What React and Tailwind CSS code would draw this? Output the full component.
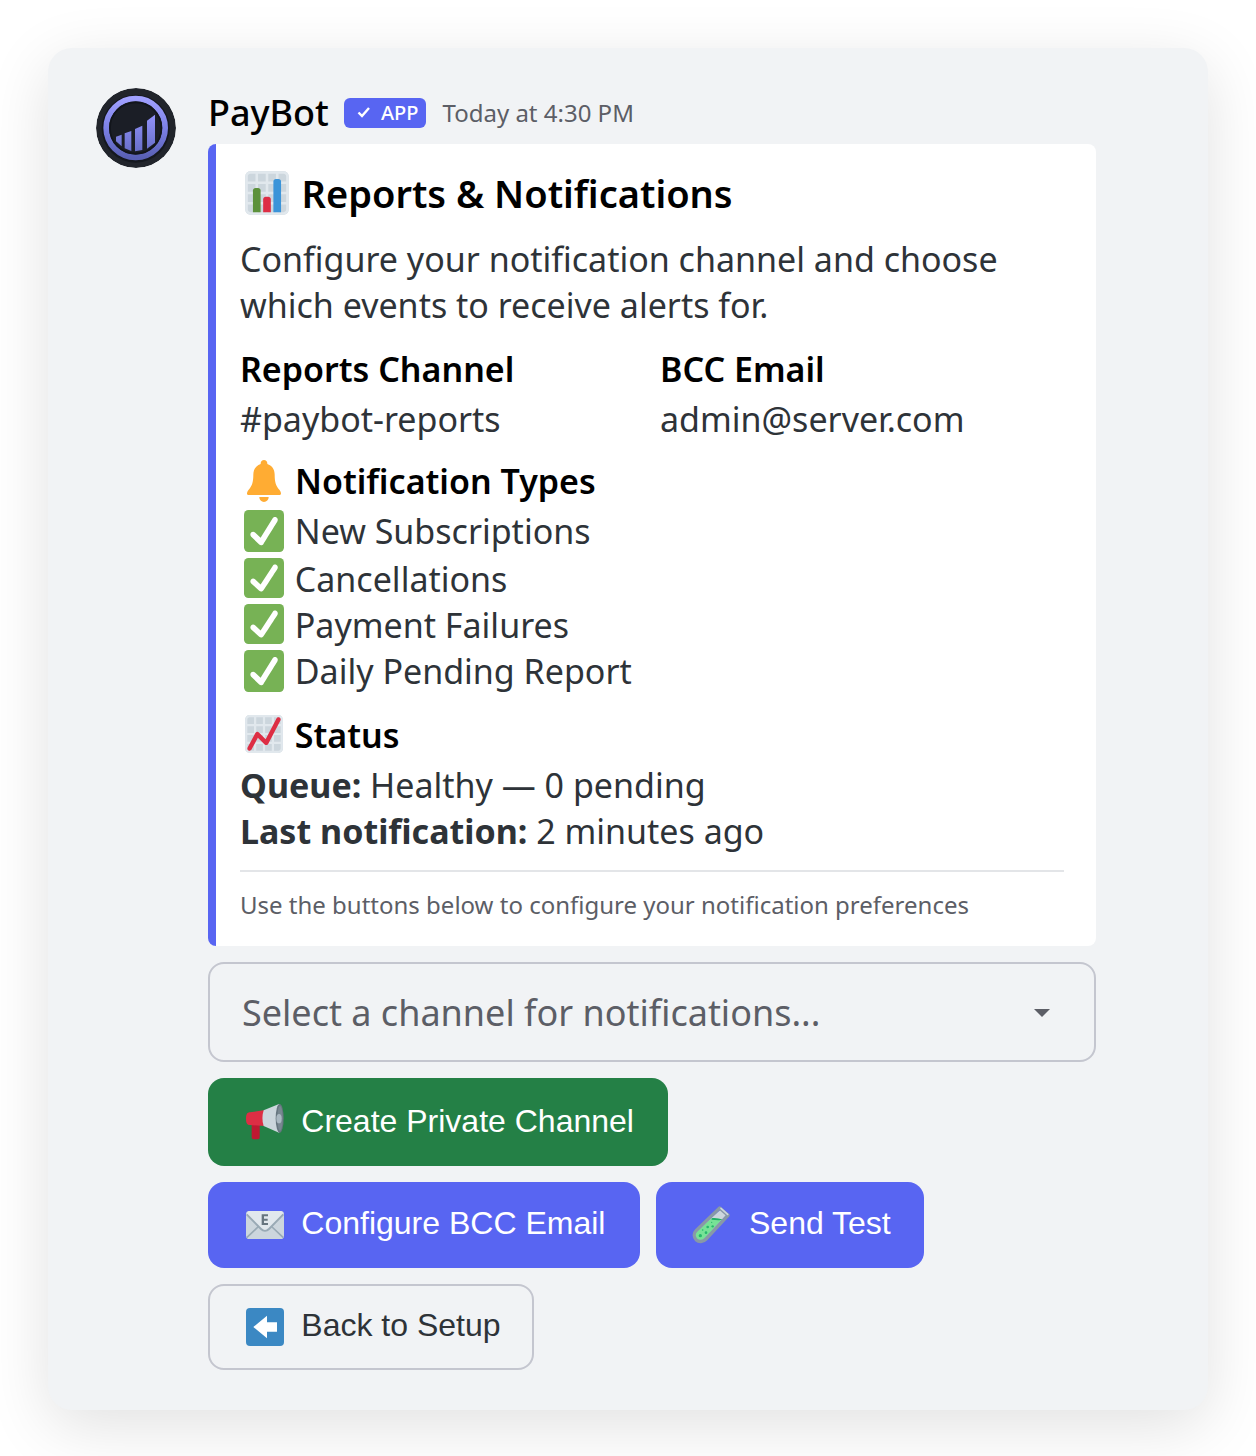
const notificationTypes = [
  { label: "New Subscriptions", row: "h-12", icon: "h-[42px]" },
  { label: "Cancellations", row: "h-[46px]", icon: "h-10" },
  { label: "Payment Failures", row: "h-[46px]", icon: "h-10" },
  { label: "Daily Pending Report", row: "h-[46px]", icon: "h-[42px]" },
];

const Avatar = () => (
  <svg className="size-20 shrink-0 rounded-full" viewBox="30 30 240 240">
    <defs>
      <linearGradient id="ring" x1="0" y1="0" x2="0" y2="1">
        <stop offset="0" stopColor="#a0a0ff" />
        <stop offset="0.5" stopColor="#7c80e6" />
        <stop offset="1" stopColor="#5960b4" />
      </linearGradient>
      <linearGradient id="bars" x1="0" y1="0" x2="0" y2="1">
        <stop offset="0" stopColor="#9292fa" />
        <stop offset="1" stopColor="#686fc9" />
      </linearGradient>
    </defs>
    <circle cx="150" cy="150" r="120" fill="#21242b" />
    <circle cx="149" cy="152" r="102" fill="#15181f" />
    <circle cx="149" cy="150" r="88.5" fill="#1b1e26" stroke="url(#ring)" strokeWidth="17" />
    <circle cx="149" cy="150" r="77" fill="none" stroke="#12151b" strokeWidth="5" />
    <path
      fill="url(#bars)"
      d="M90 176l17-6v35l-17-15zM116 166l20-7v60l-20-8zM147 153l22-10v73l-22 4zM183 128l24-18v84l-24 18z"
    />
  </svg>
);

const ChartGrid = () => (
  <>
    <rect x="1" y="1" width="34" height="34" rx="4" fill="#CCD6DD" />
    <path
      fill="#E1E8ED"
      d="M31 1H5C2.791 1 1 2.791 1 5v26c0 2.209 1.791 4 4 4h26c2.209 0 4-1.791 4-4V5c0-2.209-1.791-4-4-4zm0 2c1.103 0 2 .897 2 2v4h-6V3h4zm-4 16h6v6h-6v-6zm0-2v-6h6v6h-6zM25 3v6h-6V3h6zm-6 8h6v6h-6v-6zm0 8h6v6h-6v-6zM17 3v6h-6V3h6zm-6 8h6v6h-6v-6zm0 8h6v6h-6v-6zM3 5c0-1.103.897-2 2-2h4v6H3V5zm0 6h6v6H3v-6zm0 8h6v6H3v-6zm2 14c-1.103 0-2-.897-2-2v-4h6v6H5zm6 0v-6h6v6h-6zm8 0v-6h6v6h-6zm12 0h-4v-6h6v4c0 1.103-.897 2-2 2z"
    />
  </>
);

const BarChartIcon = () => (
  <svg className="size-[46px] shrink-0" viewBox="0 0 36 36">
    <ChartGrid />
    <path fill="#5C913B" d="M13 33H7V16c0-1.104.896-2 2-2h2c1.104 0 2 .896 2 2v17z" />
    <path fill="#3B94D9" d="M29 33h-6V9c0-1.104.896-2 2-2h2c1.104 0 2 .896 2 2v24z" />
    <path fill="#DD2E44" d="M21 33h-6V23c0-1.104.896-2 2-2h2c1.104 0 2 .896 2 2v10z" />
  </svg>
);

const TrendIcon = () => (
  <svg className="mt-0.5 size-10 shrink-0" viewBox="0 0 36 36">
    <ChartGrid />
    <path
      fill="#DD2E44"
      d="M4.998 33c-.32 0-.645-.076-.946-.239-.973-.523-1.336-1.736-.813-2.709l7-13c.299-.557.845-.939 1.47-1.031.626-.092 1.258.118 1.705.565l6.076 6.076 9.738-18.59c.512-.978 1.721-1.357 2.699-.843.979.512 1.356 1.721.844 2.7l-11 21c-.295.564-.841.953-1.47 1.05-.627.091-1.266-.113-1.716-.563l-6.1-6.099-5.724 10.631C6.4 32.619 5.71 33 4.998 33z"
    />
  </svg>
);

const BellIcon = () => (
  <svg className="mt-0.5 h-[42px] w-10 shrink-0" viewBox="0 0 36 36" preserveAspectRatio="none">
    <path
      fill="#FFAC33"
      d="M18 0c1.7 0 3 1.3 3 3v.4c4 1.2 6.6 4.4 6.6 9.1 0 6 .9 9.5 4.2 13 1 1.1 1.5 2.3 1.5 3.5 0 .6-.5 1-1 1H3.7c-.6 0-1-.4-1-1 0-1.2.5-2.4 1.5-3.5 3.3-3.5 4.2-7 4.2-13 0-4.7 2.6-7.9 6.6-9.1V3c0-1.7 1.3-3 3-3zM13.800 31.800h8.400c0 2.300-1.900 4.200-4.200 4.200s-4.200-1.900-4.200-4.200z"
    />
  </svg>
);

const CheckIcon = ({ className }) => (
  <svg className={`mt-0.5 w-10 shrink-0 ${className}`} viewBox="0 0 36 36" preserveAspectRatio="none">
    <rect width="36" height="36" rx="4" fill="#77B255" />
    <path
      fill="#FFF"
      d="M29.28 6.362c-1.156-.751-2.704-.422-3.458.736L14.936 23.877l-5.029-4.65c-1.014-.938-2.596-.875-3.533.138-.937 1.014-.875 2.596.139 3.533l7.209 6.666c.48.445 1.09.665 1.696.665.673 0 1.534-.282 2.099-1.139.332-.506 12.5-19.27 12.5-19.27.751-1.159.421-2.707-.737-3.458z"
    />
  </svg>
);

const MegaphoneIcon = () => (
  <svg className="size-[38px] shrink-0" viewBox="48 39 114 114">
    <path fill="#BE1931" d="M65 98h24v44c0 4-2 6-6 6H71c-4 0-6-2-6-6z" />
    <path fill="#DD2E44" d="M60 67l45-7v48l-45-3c-8 0-12-6-12-19s4-19 12-19z" />
    <path fill="#CCD6DD" d="M101 61l46-19c10 10 10 76 0 86l-46-20c-5-14-5-33 0-47z" />
    <ellipse cx="149" cy="85" rx="12" ry="43" fill="#66757F" />
    <ellipse cx="150" cy="85" rx="8" ry="37" fill="#788791" />
    <ellipse cx="147" cy="86" rx="8" ry="14" fill="#AAB8C2" />
  </svg>
);

const EnvelopeIcon = () => (
  <svg className="size-[38px] shrink-0" viewBox="48 48 114 114">
    <rect x="48" y="63" width="114" height="84" rx="10" fill="#CCD6DD" />
    <path d="M50 143l37-35M160 143l-37-35" stroke="#99AAB5" strokeWidth="5" />
    <path
      fill="#E1E8ED"
      d="M50 70c2-4 4-7 8-7h94c4 0 6 3 8 7l-43 46c-7 7-17 7-24 0z"
    />
    <path fill="none" stroke="#99AAB5" strokeWidth="6" d="M50 73l43 44c7 7 17 7 24 0l43-44" />
    <path fill="#66757F" d="M95 73h19v6h-12v7h11v6h-11v7h12v6H95z" />
  </svg>
);

const TestTubeIcon = () => (
  <svg className="size-[38px] shrink-0" viewBox="66 48 114 114">
    <path d="M152 59l16 17-62 68c-8 8-19 9-26 3-8-7-7-18 0-26z" fill="#CCD6DD" />
    <path d="M126 84c10 4 20 0 30 4l-52 58c-8 8-19 7-25 1-7-7-6-17 1-25z" fill="#77E296" />
    <path d="M125 85c10-4 20 2 33 2-8 6-20 3-33 2z" fill="#1FAF66" />
    <path
      d="M149 54l25 22-66 71c-9 10-22 9-29 3-8-8-9-20 0-29z"
      fill="none"
      stroke="#8899A6"
      strokeWidth="10"
      strokeLinejoin="round"
    />
    <path d="M153 55l20 18" stroke="#CCD6DD" strokeWidth="5" strokeLinecap="round" />
    <g fill="#26B96D">
      <circle cx="91" cy="137" r="5" />
      <circle cx="108" cy="128" r="4" />
      <circle cx="98" cy="120" r="2.5" />
      <circle cx="113" cy="111" r="4" />
      <circle cx="128" cy="109" r="3.5" />
      <circle cx="125" cy="97" r="2" />
    </g>
  </svg>
);

const BackIcon = () => (
  <svg className="size-[38px] shrink-0" viewBox="0 0 114 114">
    <rect width="114" height="114" rx="12" fill="#3B88C3" />
    <path fill="#FFF" d="M22 57l41-34v20h30v28H63v20z" />
  </svg>
);

const App = () => {
  return (
    <div className="h-[1456px] w-[1256px] overflow-hidden bg-white p-12 font-['Noto_Sans',sans-serif]">
      <div className="flex h-[1362px] items-start gap-8 rounded-3xl bg-[#f1f3f5] pl-12 pt-10 shadow-[0_16px_64px_rgba(0,0,0,0.12)]">
        <Avatar />
        <div className="w-[888px]">
          <div className="flex h-14 items-start">
            <span className="w-[136px] whitespace-nowrap text-[36px] font-medium leading-[50px] text-black">
              PayBot
            </span>
            <span className="mt-[10px] flex h-[30px] w-[82px] items-center rounded-md bg-[#5865f2] pl-[13px] text-white">
              <svg className="mr-[10px] size-[14px] shrink-0" viewBox="0 0 14 14" fill="none">
                <path d="M1.5 6.5L5 10l7-8" stroke="currentColor" strokeWidth="2.4" />
              </svg>
              <span className="text-[20px] font-medium leading-[30px]">APP</span>
            </span>
            <span className="ml-[16.5px] text-[24px] leading-[50px] text-[#5c5e66]">Today at 4:30 PM</span>
          </div>

          <div className="h-[802px] rounded-lg border-l-8 border-[#5865f2] bg-white pl-6 pr-8 pt-6 text-[34px] leading-[46px] text-[#2e3338]">
            <div className="flex h-[50px] items-center pl-1 text-[38px] font-semibold leading-[50px] text-black">
              <BarChartIcon />
              <span className="ml-[11.5px]">Reports &amp; Notifications</span>
            </div>
            <p className="mt-[18px] whitespace-nowrap">
              Configure your notification channel and choose
              <br />
              which events to receive alerts for.
            </p>
            <div className="mt-[18px] grid grid-cols-[420px_1fr]">
              <div>
                <div className="h-[50px] font-semibold text-black">Reports Channel</div>
                <div>#paybot-reports</div>
              </div>
              <div>
                <div className="h-[50px] font-semibold text-black">BCC Email</div>
                <div>admin@server.com</div>
              </div>
            </div>
            <div className="mt-4 flex h-[50px] items-start pl-1 font-semibold text-black">
              <BellIcon />
              <span className="ml-[11px]">Notification Types</span>
            </div>
            {notificationTypes.map((type) => (
              <div key={type.label} className={`flex items-start pl-1 ${type.row}`}>
                <CheckIcon className={type.icon} />
                <span className="ml-[10.8px]">{type.label}</span>
              </div>
            ))}
            <div className="mt-[18px] flex h-[50px] items-start pl-1 font-semibold text-black">
              <TrendIcon />
              <span className="ml-[10.8px]">Status</span>
            </div>
            <p>
              <b className="font-bold">Queue:</b> Healthy — 0 pending
            </p>
            <p>
              <b className="font-bold">Last notification:</b> 2 minutes ago
            </p>
            <div className="mt-4 border-t-2 border-[#e3e5e8] pt-[15px] text-[24px] leading-9 text-[#5c5e66]">
              Use the buttons below to configure your notification preferences
            </div>
          </div>

          <div className="mt-4 flex h-[100px] items-center justify-between rounded-2xl border-2 border-[#c4c6cf] pl-8 pr-11 pt-0.5 text-[36px] text-[#5c5e66]">
            <span>Select a channel for notifications...</span>
            <svg className="h-2 w-4" viewBox="0 0 16 8">
              <path d="M0 0h16L8 8z" fill="#5c5e66" />
            </svg>
          </div>

          <div className="mt-4 flex flex-col items-start gap-4 font-['Liberation_Sans',Arial,sans-serif] text-[32px] leading-[38px]">
            <button className="flex h-[88px] w-[460px] items-center rounded-2xl bg-[#248046] pl-[38px] text-white">
              <MegaphoneIcon />
              <span className="ml-[17.3px] pb-0.5">Create Private Channel</span>
            </button>
            <div className="flex gap-4">
              <button className="flex h-[86px] w-[432px] items-center rounded-2xl bg-[#5865f2] pl-[38px] text-white">
                <EnvelopeIcon />
                <span className="ml-[17.3px] pb-1">Configure BCC Email</span>
              </button>
              <button className="flex h-[86px] w-[268px] items-center rounded-2xl bg-[#5865f2] pl-9 text-white">
                <TestTubeIcon />
                <span className="ml-[19px] pb-1">Send Test</span>
              </button>
            </div>
            <button className="flex h-[86px] w-[326px] items-center rounded-2xl border-2 border-[#c4c6cf] pl-9 text-[#2e3338]">
              <BackIcon />
              <span className="ml-[17.3px] pb-1">Back to Setup</span>
            </button>
          </div>
        </div>
      </div>
    </div>
  );
};

export default App;
